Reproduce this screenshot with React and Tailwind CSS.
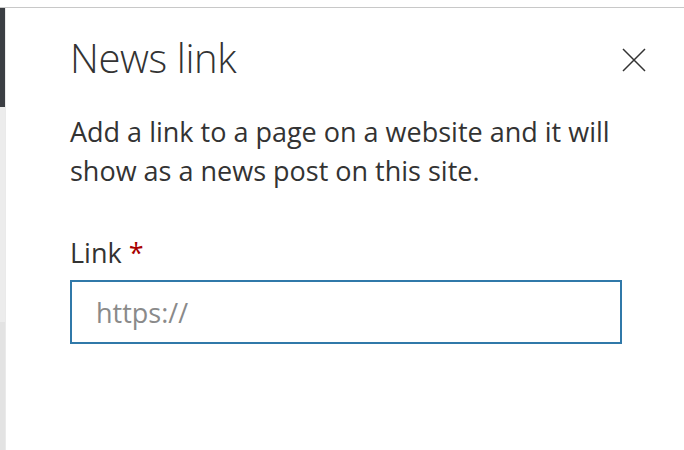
export default function App() {
  return (
    <div className="w-[684px] h-[450px] bg-white overflow-hidden flex flex-col" style={{ fontFamily: '"Open Sans", "Noto Sans", sans-serif' }}>
      <div className="h-[7px] bg-white" />
      <div className="h-px bg-[#c8c8c8]" />
      <div className="flex flex-1">
        <div className="w-[6px] shrink-0 flex flex-col border-r border-[#eaeaea]">
          <div className="h-[99px] bg-[#3b3e43]" />
          <div className="h-[215px] bg-[#ececec]" />
          <div className="flex-1 bg-[#e3e3e3]" />
        </div>
        <div className="flex-1 min-w-0 pl-[64px] pr-[62px]">
          <div className="flex items-start justify-between pt-[26px]">
            <h1 className="text-[40px] font-light text-[#333] leading-[48px] tracking-[-0.4px]">News link</h1>
            <button className="mt-[14px] mr-[-24px] text-[#333]">
              <svg width="24" height="24" viewBox="0 0 24 24" fill="none" stroke="currentColor" strokeWidth="1.5">
                <path d="M1 1L23 23M23 1L1 23" />
              </svg>
            </button>
          </div>
          <p className="mt-[30px] text-[27px] leading-[39px] text-[#333]">
            Add a link to a page on a website and it will show as a news post on this site.
          </p>
          <label className="block mt-[45px] text-[27px] leading-[36px] text-[#333]">
            Link <span className="text-[#a80000]">*</span>
          </label>
          <input
            type="text"
            placeholder="https://"
            className="mt-[9px] block w-full h-[64px] border-2 border-[#3079a9] px-[24px] text-[27px] text-[#333] placeholder:text-[#8a8a8a] outline-none"
          />
        </div>
      </div>
    </div>
  );
}
